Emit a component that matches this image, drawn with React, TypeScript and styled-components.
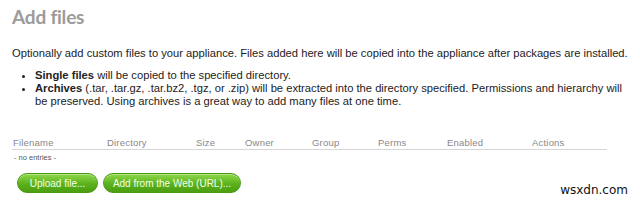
import React from 'react'
import styled, { createGlobalStyle } from 'styled-components'

const GlobalStyle = createGlobalStyle`
  html, body {
    margin: 0;
    padding: 0;
    background: #fff;
  }
  body {
    font-family: 'Liberation Sans', Arial, sans-serif;
    color: #222;
  }
`

const Page = styled.div`
  position: relative;
  width: 640px;
  height: 203px;
  padding: 4px 12px 0;
  box-sizing: border-box;
  overflow: hidden;
`

const Title = styled.h1`
  margin: 0;
  font-family: Lato, 'Open Sans', sans-serif;
  font-weight: 700;
  font-size: 19px;
  line-height: 26px;
  letter-spacing: -0.2px;
  color: #9b9b9b;
`

const Intro = styled.p`
  margin: 17px 0 0;
  font-size: 11.2px;
  line-height: 13px;
  white-space: nowrap;
`

const Bullets = styled.ul`
  margin: 9px 0 0;
  width: 616px;
  padding-left: 23px;
  box-sizing: border-box;
  font-size: 11.2px;
  line-height: 13px;

  li {
    margin: 0;
  }
  b {
    font-weight: 700;
  }
`

const Table = styled.div`
  margin-top: 29px;
  width: 595px;
`

const HeadRow = styled.div`
  display: grid;
  grid-template-columns: 94px 89px 49px 67px 66px 69px 85px 76px;
  padding: 0 1px;
  border-bottom: 1px solid #d6d6d6;
`

const HeadCell = styled.div`
  font-size: 9.5px;
  line-height: 12px;
  color: #888;
  letter-spacing: 0.2px;
`

const Empty = styled.div`
  padding: 3px 2px 0;
  font-size: 7.5px;
  line-height: 10px;
  color: #555;
`

const Buttons = styled.div`
  display: flex;
  gap: 5px;
  margin: 10px 0 0 5px;
`

const GreenButton = styled.button<{ $width: number }>`
  width: ${p => p.$width}px;
  height: 20px;
  border: 1px solid #4a9a12;
  border-radius: 10px;
  background: linear-gradient(#8fd84a, #5bb21c 55%, #4a9e10);
  color: #f3ffe8;
  font-family: 'Liberation Sans', Arial, sans-serif;
  font-size: 10px;
  padding: 0;
  box-shadow: inset 0 1px 0 rgba(255, 255, 255, 0.35);
  cursor: pointer;
`

const Watermark = styled.div`
  position: absolute;
  right: 12px;
  bottom: 6px;
  font-family: 'DejaVu Sans', sans-serif;
  font-size: 12px;
  color: #111;
`

const columns = ['Filename', 'Directory', 'Size', 'Owner', 'Group', 'Perms', 'Enabled', 'Actions']

export default function App() {
  return (
    <>
      <GlobalStyle />
      <Page>
        <Title>Add files</Title>
        <Intro>
          Optionally add custom files to your appliance. Files added here will be copied into the appliance after
          packages are installed.
        </Intro>
        <Bullets>
          <li>
            <b>Single files</b> will be copied to the specified directory.
          </li>
          <li>
            <b>Archives</b> (.tar, .tar.gz, .tar.bz2, .tgz, or .zip) will be extracted into the directory specified.
            Permissions and hierarchy will be preserved. Using archives is a great way to add many files at one time.
          </li>
        </Bullets>
        <Table>
          <HeadRow>
            {columns.map(c => (
              <HeadCell key={c}>{c}</HeadCell>
            ))}
          </HeadRow>
          <Empty>- no entries -</Empty>
        </Table>
        <Buttons>
          <GreenButton $width={81}>Upload file...</GreenButton>
          <GreenButton $width={138}>Add from the Web (URL)...</GreenButton>
        </Buttons>
        <Watermark>wsxdn.com</Watermark>
      </Page>
    </>
  )
}
